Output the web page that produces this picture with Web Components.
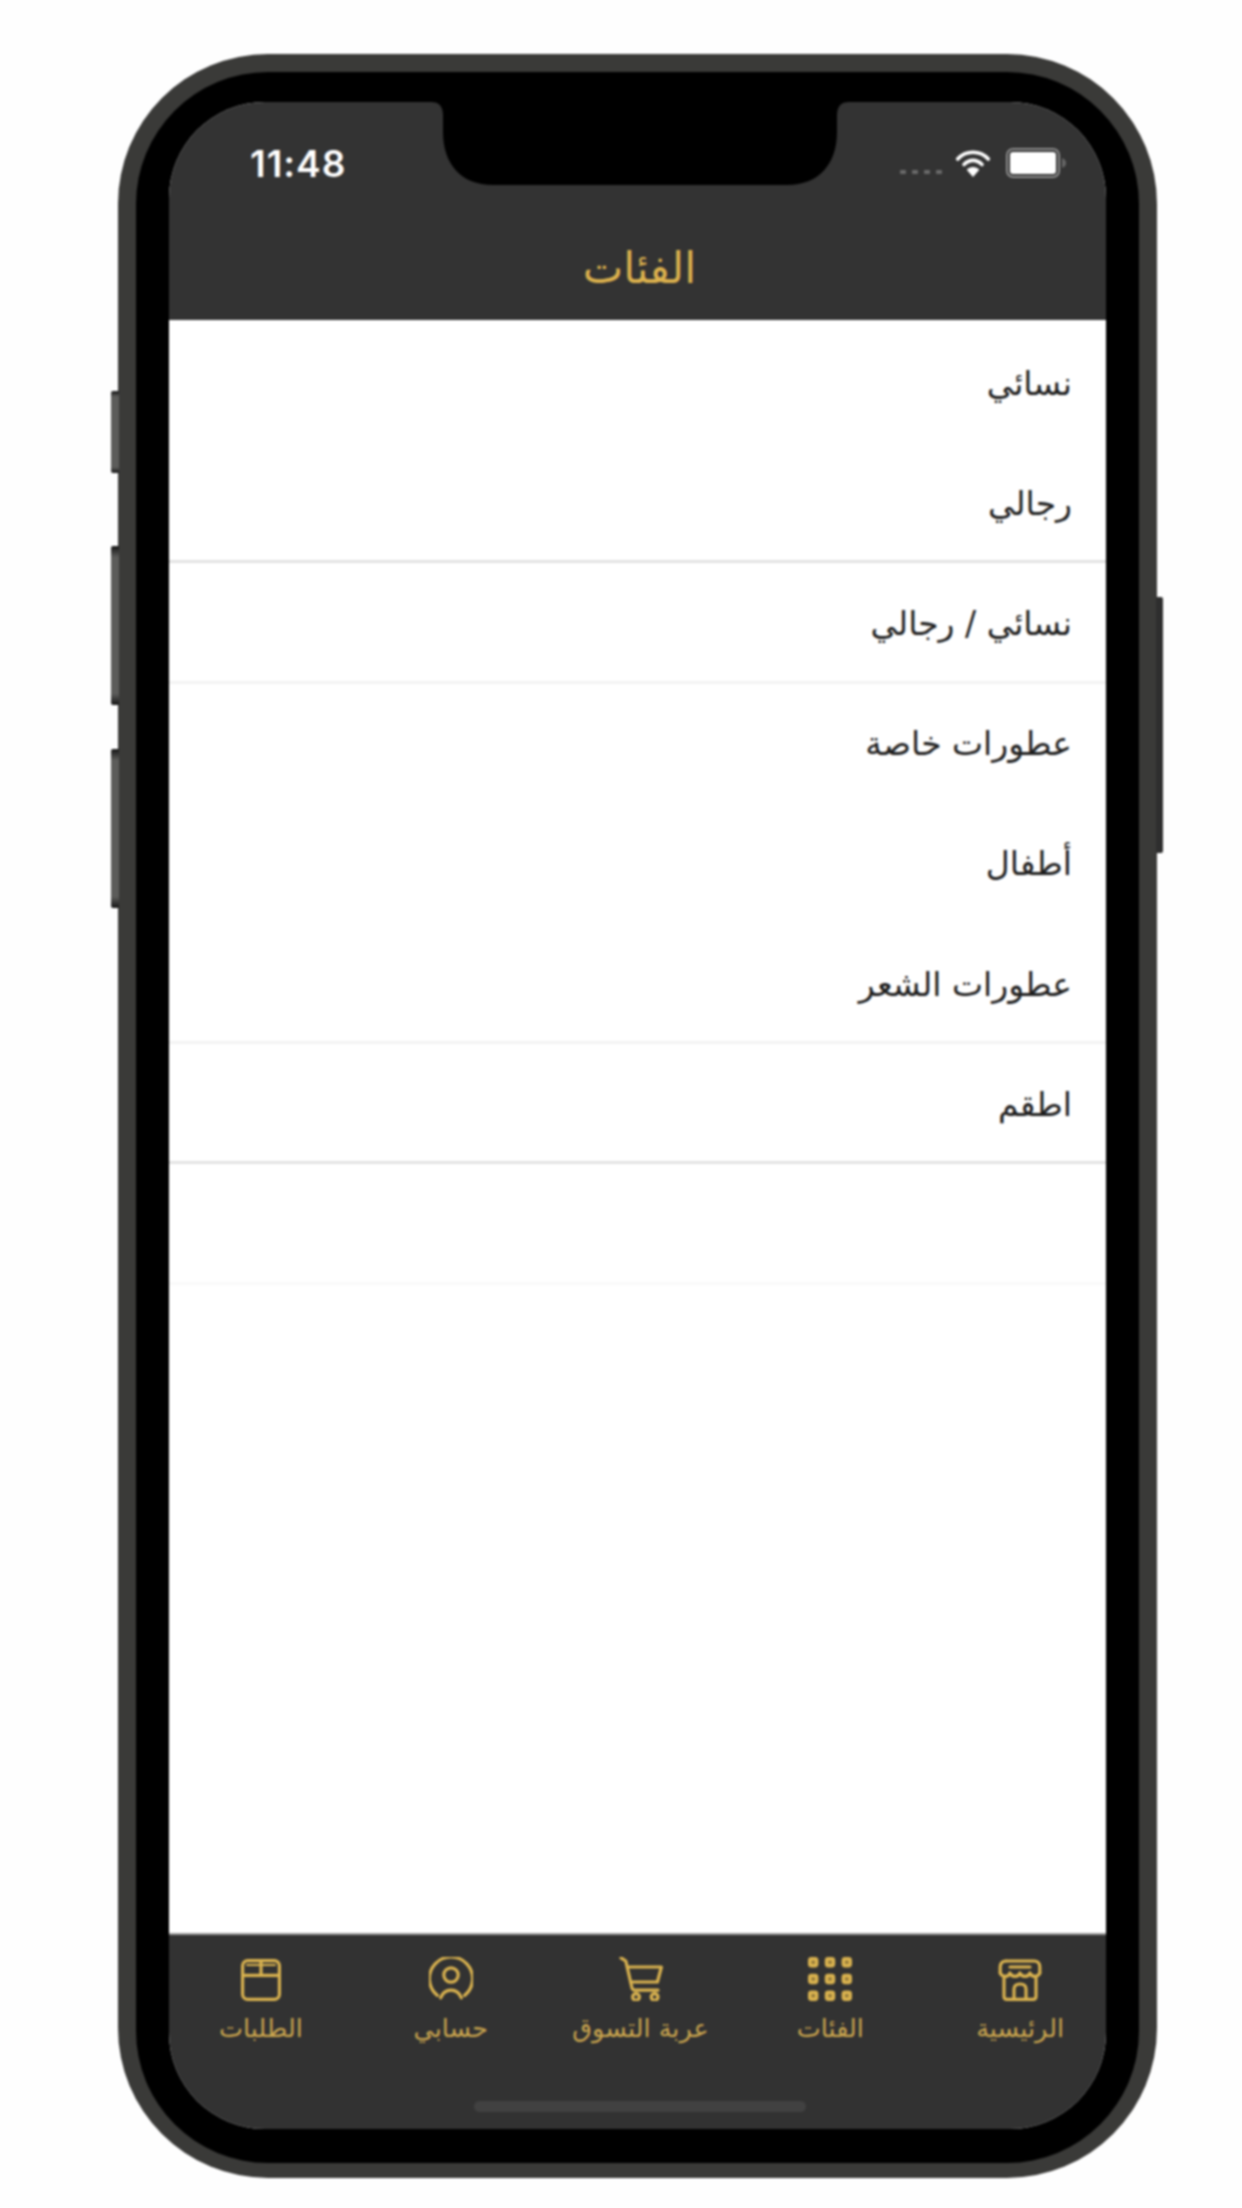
<!DOCTYPE html>
<html lang="ar">
<head>
<meta charset="utf-8">
<title>الفئات</title>
<style>
html,body{margin:0;padding:0;background:#fefefe;}
body{width:1242px;height:2208px;overflow:hidden;font-family:"DejaVu Sans",sans-serif;}
</style>
</head>
<body>
<phone-frame>
  <app-header title-text="الفئات"></app-header>
  <category-list>
    <category-item>نسائي</category-item>
    <category-item line="strong">رجالي</category-item>
    <category-item line="soft">نسائي / رجالي</category-item>
    <category-item>عطورات خاصة</category-item>
    <category-item>أطفال</category-item>
    <category-item line="soft">عطورات الشعر</category-item>
    <category-item line="strong">اطقم</category-item>
    <category-item line="faint"></category-item>
  </category-list>
  <tab-bar>
    <tab-item icon="store">الرئيسية</tab-item>
    <tab-item icon="grid">الفئات</tab-item>
    <tab-item icon="cart">عربة التسوق</tab-item>
    <tab-item icon="user">حسابي</tab-item>
    <tab-item icon="box">الطلبات</tab-item>
  </tab-bar>
</phone-frame>
<script>
function shadow(el, html){ el.attachShadow({mode:'open'}).innerHTML = html; }

customElements.define('phone-frame', class extends HTMLElement{
  constructor(){ super(); shadow(this, `<style>
    :host{display:block;position:relative;width:1039px;height:2124px;margin:54px 0 0 118px;filter:blur(.9px);}
    .body{box-sizing:border-box;height:100%;background:#3a3a38;border-radius:150px;padding:18px 18px 15px;}
    .bezel{box-sizing:border-box;height:100%;background:#000;border-radius:132px;padding:30px 33px 34px;}
    .screen{position:relative;height:100%;overflow:hidden;border-radius:96px;background:#fff;display:flex;flex-direction:column;}
    .notch{position:absolute;top:0;left:262px;width:418px;height:83px;}
    .btn{position:absolute;width:8px;left:-7px;border-radius:2px 0 0 2px;background:linear-gradient(#151515 0,#5c5c5a 7%,#5c5c5a 93%,#151515 100%);}
    .b1{top:337px;height:82px}.b2{top:492px;height:159px}.b3{top:695px;height:159px}
    .b4{left:auto;right:-6px;width:7px;top:543px;height:256px;background:#2e2e2e;border-radius:0 2px 2px 0;}
  </style>
  <div class="btn b1"></div><div class="btn b2"></div><div class="btn b3"></div><div class="btn b4"></div>
  <div class="body"><div class="bezel"><div class="screen">
    <slot></slot>
    <svg class="notch" viewBox="0 0 418 83"><path fill="#000" d="M0 0H418C410 0 406 4 406 14V30C406 62 388 83 356 83H62C30 83 12 62 12 30V14C12 4 8 0 0 0Z"/></svg>
  </div></div></div>`); }
});

customElements.define('status-bar', class extends HTMLElement{
  constructor(){ super(); shadow(this, `<style>
    :host{display:flex;align-items:center;justify-content:space-between;height:122px;padding:0 39px 0 81px;box-sizing:border-box;direction:ltr;}
    .time{font:600 37px/1 Inter,"Liberation Sans",sans-serif;letter-spacing:1px;color:#fff;}
    .right{display:flex;align-items:center;gap:15px;}
    .dots{display:flex;gap:6px;align-self:flex-end;margin:0 -2px 4px 0;}
    .dots i{width:6px;height:4px;background:#6a6a6a;border-radius:1px;display:block;}
    svg{display:block;}
  </style>
  <span class="time">11:48</span>
  <div class="right">
    <div class="dots"><i></i><i></i><i></i><i></i></div>
    <svg width="36" height="29" viewBox="0 0 40 30"><g fill="none" stroke="#fff" stroke-width="4" stroke-linecap="round"><path d="M3 10C12 0 28 0 37 10"/><path d="M10 16C16 10 24 10 30 16"/></g><path fill="#fff" d="M20 30L13 22C17 18 23 18 27 22Z"/></svg>
    <svg width="61" height="30" viewBox="0 0 61 30"><rect x="1" y="1" width="52" height="28" rx="6" fill="none" stroke="#8c8c8c" stroke-width="2"/><rect x="4" y="4" width="46" height="22" rx="3" fill="#fff"/><path d="M56 10c3 1 4 3 4 5s-1 4-4 5z" fill="#666"/></svg>
  </div>`); }
});

customElements.define('app-header', class extends HTMLElement{
  constructor(){ super(); shadow(this, `<style>
    :host{display:block;background:#333;height:218px;flex:none;}
    h1{margin:0;height:88px;padding-left:4px;display:flex;align-items:center;justify-content:center;font:400 43px/1 "DejaVu Sans",sans-serif;color:#dcb14d;}
  </style><status-bar></status-bar><h1></h1>`);
    this.shadowRoot.querySelector('h1').textContent = this.getAttribute('title-text') || ''; }
});

customElements.define('category-list', class extends HTMLElement{
  constructor(){ super(); shadow(this, `<style>
    :host{display:grid;grid-auto-rows:120.2px;align-content:start;flex:1;padding-top:3px;background:#fff;}
  </style><slot></slot>`); }
});

customElements.define('category-item', class extends HTMLElement{
  constructor(){ super(); shadow(this, `<style>
    :host{display:flex;align-items:center;box-sizing:border-box;padding:3px 34px 0;direction:rtl;border-bottom:3px solid transparent;
      font:400 33px/1 "DejaVu Sans",sans-serif;color:#1e1e1e;}
    :host([line=strong]){border-bottom-color:#e3e3e3;}
    :host([line=soft]){border-bottom-color:#f3f3f3;}
    :host([line=faint]){border-bottom-color:#f9f9f9;}
  </style><slot></slot>`); }
});

customElements.define('tab-bar', class extends HTMLElement{
  constructor(){ super(); shadow(this, `<style>
    :host{display:block;position:relative;flex:none;height:196px;box-sizing:border-box;background:#323232;border-top:2px solid #999;}
    .row{display:flex;direction:rtl;padding:22px 0 0;margin:0 -9px 0 -3px;}
    ::slotted(tab-item){flex:1 1 0;}
    .home{position:absolute;left:305px;bottom:17px;width:332px;height:11px;border-radius:6px;background:#414141;}
  </style><div class="row"><slot></slot></div><div class="home"></div>`); }
});

const ICONS = {
  store:`<g fill="none" stroke="#d9b24f" stroke-width="1.6" stroke-linejoin="round" stroke-linecap="round">
    <path d="M5 3H19C20.8 3 21.9 4.2 21.9 6V9"/><path d="M5 3C3.2 3 2.1 4.2 2.1 6V9"/>
    <path d="M2.1 9C3 11.2 6.3 11.2 7 9C7.6 11.2 11.4 11.2 12 9C12.6 11.2 16.4 11.2 17 9C17.6 11.2 21 11.2 21.9 9"/>
    <path d="M7 6H17"/>
    <path d="M4 11.5V20.8C4 21.6 4.6 22.2 5.5 22.2H18.5C19.4 22.2 20 21.6 20 20.8V11.5"/>
    <path d="M9 22.2V17C9 15.3 10.2 14.5 12 14.5C13.8 14.5 15 15.3 15 17V22.2"/></g>`,
  grid:(()=>{let s='';for(const y of [3.6,12,20.4])for(const x of [3.6,12,20.4])s+=`<rect x="${x-2.6}" y="${y-2.6}" width="5.2" height="5.2" rx="1.7" fill="#d9b24f"/><circle cx="${x}" cy="${y}" r=".9" fill="#8a7236"/>`;return s;})(),
  cart:`<g fill="none" stroke="#d9b24f" stroke-width="1.6" stroke-linejoin="round" stroke-linecap="round">
    <path d="M2 1.4L4.4 3L7.5 16.5C7.7 17.3 8.2 17.6 9 17.6H20.5"/>
    <path d="M5.2 6H22.2L20.2 13.5H7"/>
    <circle cx="9.5" cy="21" r="1.7"/><circle cx="18.8" cy="21" r="1.7"/></g>`,
  user:`<g fill="none" stroke="#d9b24f" stroke-width="1.6" stroke-linecap="round">
    <path d="M5.2 20.2A10.8 10.8 0 1 1 18.8 20.2"/>
    <circle cx="12" cy="10" r="3.6"/>
    <path d="M6.8 21.4C8 18.4 10 17.6 12 17.6C14 17.6 16 18.4 17.2 21.4"/></g>`,
  box:`<g fill="none" stroke="#d9b24f" stroke-width="1.6" stroke-linejoin="round">
    <rect x="2.8" y="2.8" width="18.4" height="19.4" rx="2.6"/>
    <path d="M2.8 10.2H21.2"/><path d="M12 2.8V10.2"/><path d="M4.6 5H19.4" stroke-width="1"/></g>`
};

customElements.define('tab-item', class extends HTMLElement{
  constructor(){ super(); shadow(this, `<style>
    :host{display:flex;flex-direction:column;align-items:center;gap:11px;font:400 25.5px/32px "DejaVu Sans",sans-serif;color:#c9a44e;white-space:nowrap;}
    svg{display:block;width:44px;height:44px;}
  </style><svg viewBox="1 1 22 22">${ICONS[this.getAttribute('icon')]||''}</svg><span><slot></slot></span>`); }
});
</script>
</body>
</html>
